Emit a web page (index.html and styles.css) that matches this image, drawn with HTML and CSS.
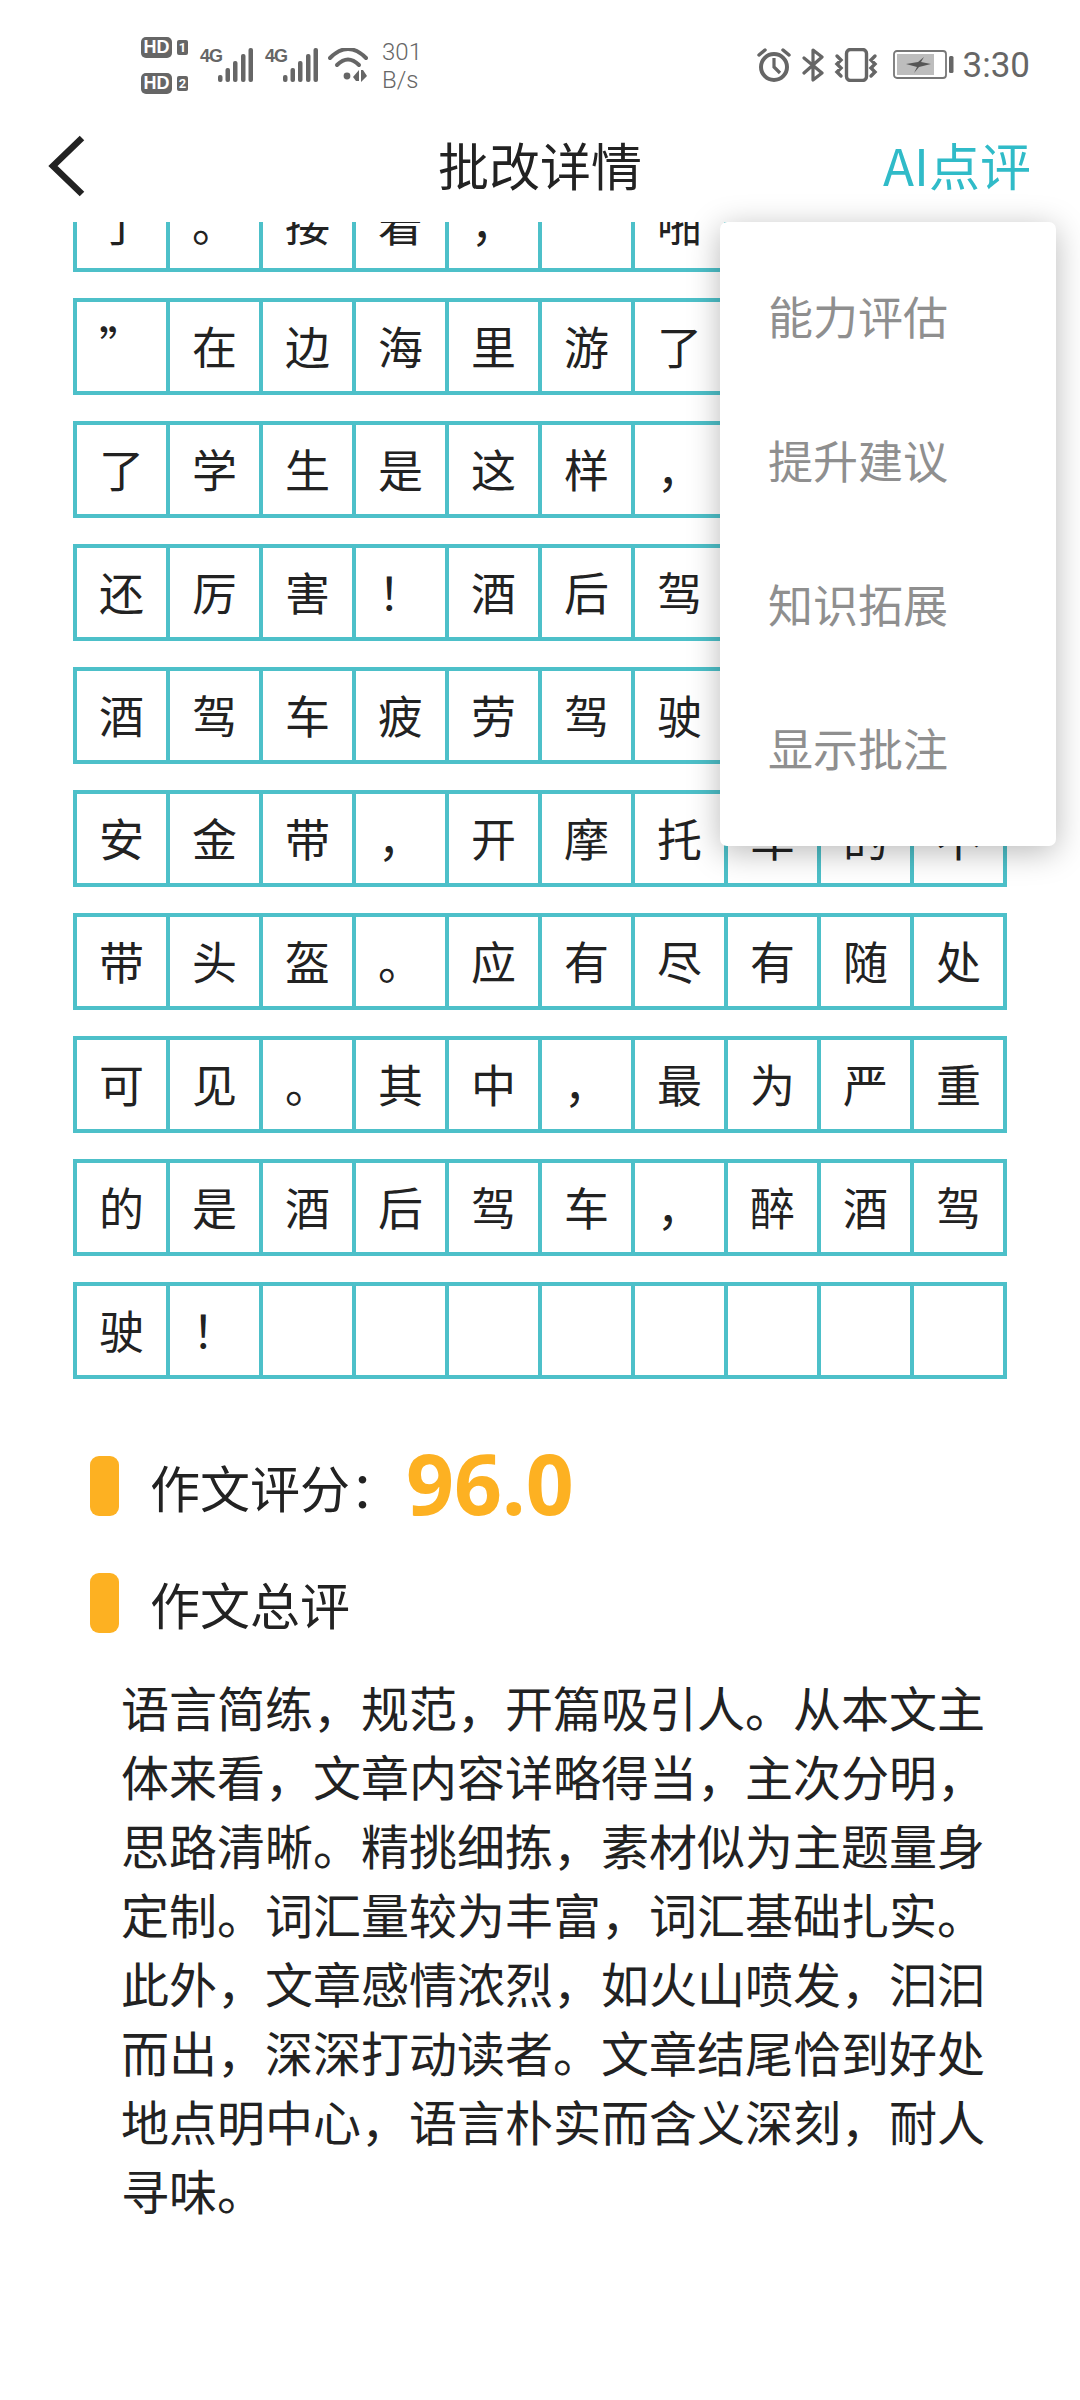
FILE: index.html
```html
<!DOCTYPE html>
<html lang="zh-CN">
<head>
    <meta charset="UTF-8">
    <meta name="viewport" content="width=device-width, initial-scale=1.0">
    <title>批改详情</title>
    <link rel="stylesheet" href="styles.css">
</head>
<body>
<div class="page">
    <div class="status-bar">
        <div class="sim-block">
            <div class="sim-row"><span class="hd">HD</span><span class="sim-no">1</span></div>
            <div class="sim-row"><span class="hd">HD</span><span class="sim-no">2</span></div>
        </div>
        <div class="signal">
            <span class="net">4G</span>
            <svg class="bars" viewBox="0 0 35 34"><rect x="0" y="27" width="4.5" height="7" rx="2"/><rect x="7.5" y="20" width="4.5" height="14" rx="2"/><rect x="15" y="13" width="4.5" height="21" rx="2"/><rect x="23" y="6" width="4.5" height="28" rx="2"/><rect x="30.5" y="0" width="4.5" height="34" rx="2"/></svg>
        </div>
        <div class="signal">
            <span class="net">4G</span>
            <svg class="bars" viewBox="0 0 35 34"><rect x="0" y="27" width="4.5" height="7" rx="2"/><rect x="7.5" y="20" width="4.5" height="14" rx="2"/><rect x="15" y="13" width="4.5" height="21" rx="2"/><rect x="23" y="6" width="4.5" height="28" rx="2"/><rect x="30.5" y="0" width="4.5" height="34" rx="2"/></svg>
        </div>
        <svg class="wifi" viewBox="0 0 40 34"><path d="M2 10 Q20 -8 38 10" fill="none" stroke="#666" stroke-width="4" stroke-linecap="round"/><path d="M9 17 Q20 6 31 17" fill="none" stroke="#666" stroke-width="4" stroke-linecap="round"/><circle cx="19" cy="28" r="3.4" fill="#666"/><path d="M31 22 V33 H28 L25 29 Z M33 22 H35 L39 28 H33 Z M33 28 H39 L33 34 Z" fill="#666"/></svg>
        <div class="speed"><span>301</span><span>B/s</span></div>
        <div class="status-right">
            <svg class="alarm" viewBox="0 0 34 34"><circle cx="17" cy="19" r="13" fill="none" stroke="#666" stroke-width="4"/><path d="M17 10 V19 L23 25" fill="none" stroke="#666" stroke-width="3.2"/><path d="M2 7 L8 2 M32 7 L26 2" stroke="#666" stroke-width="3.5" stroke-linecap="round"/></svg>
            <svg class="bluetooth" viewBox="0 0 22 34"><path d="M2 10 L20 25 L11 32 V2 L20 9 L2 25" fill="none" stroke="#666" stroke-width="3.2" stroke-linejoin="round" stroke-linecap="round"/></svg>
            <svg class="vibrate" viewBox="0 0 44 34"><rect x="12.5" y="1.5" width="20" height="31" rx="4" fill="none" stroke="#666" stroke-width="3.4"/><path d="M3 6 L7 10 L3 14 L7 18 L3 22 L7 26 M41 6 L37 10 L41 14 L37 18 L41 22 L37 26" transform="translate(0 2)" fill="none" stroke="#666" stroke-width="3.4" stroke-linecap="round"/></svg>
            <svg class="battery" viewBox="0 0 62 30"><rect x="1" y="1" width="52" height="27" rx="3" fill="none" stroke="#777" stroke-width="1.8"/><rect x="4" y="4" width="37" height="21" fill="#bdbdbd"/><path d="M13 14 L25 12 L31 7 L28 12 L38 14 L26 17 L21 23 L24 17 Z" fill="#555"/><rect x="56" y="6" width="4.5" height="17" rx="1.5" fill="#666"/></svg>
            <span class="clock">3:30</span>
        </div>
    </div>

    <header class="nav">
        <svg class="back" viewBox="0 0 40 62"><path d="M35 3 L6 31 L35 59" fill="none" stroke="#222" stroke-width="6.5"/></svg>
        <h1 class="nav-title">批改详情</h1>
        <a class="nav-action">AI点评</a>
    </header>

    <main class="content">
        <div class="essay-grid">
            <div class="grid-row"><span class="cell">了</span><span class="cell">。</span><span class="cell">接</span><span class="cell">着</span><span class="cell">，</span><span class="cell"></span><span class="cell">啪</span><span class="cell"></span><span class="cell"></span><span class="cell"></span></div>
            <div class="grid-row"><span class="cell">”</span><span class="cell">在</span><span class="cell">边</span><span class="cell">海</span><span class="cell">里</span><span class="cell">游</span><span class="cell">了</span><span class="cell"></span><span class="cell"></span><span class="cell"></span></div>
            <div class="grid-row"><span class="cell">了</span><span class="cell">学</span><span class="cell">生</span><span class="cell">是</span><span class="cell">这</span><span class="cell">样</span><span class="cell">，</span><span class="cell"></span><span class="cell"></span><span class="cell"></span></div>
            <div class="grid-row"><span class="cell">还</span><span class="cell">厉</span><span class="cell">害</span><span class="cell">！</span><span class="cell">酒</span><span class="cell">后</span><span class="cell">驾</span><span class="cell"></span><span class="cell"></span><span class="cell"></span></div>
            <div class="grid-row"><span class="cell">酒</span><span class="cell">驾</span><span class="cell">车</span><span class="cell">疲</span><span class="cell">劳</span><span class="cell">驾</span><span class="cell">驶</span><span class="cell"></span><span class="cell"></span><span class="cell"></span></div>
            <div class="grid-row"><span class="cell">安</span><span class="cell">金</span><span class="cell">带</span><span class="cell">，</span><span class="cell">开</span><span class="cell">摩</span><span class="cell">托</span><span class="cell">车</span><span class="cell">的</span><span class="cell">不</span></div>
            <div class="grid-row"><span class="cell">带</span><span class="cell">头</span><span class="cell">盔</span><span class="cell">。</span><span class="cell">应</span><span class="cell">有</span><span class="cell">尽</span><span class="cell">有</span><span class="cell">随</span><span class="cell">处</span></div>
            <div class="grid-row"><span class="cell">可</span><span class="cell">见</span><span class="cell">。</span><span class="cell">其</span><span class="cell">中</span><span class="cell">，</span><span class="cell">最</span><span class="cell">为</span><span class="cell">严</span><span class="cell">重</span></div>
            <div class="grid-row"><span class="cell">的</span><span class="cell">是</span><span class="cell">酒</span><span class="cell">后</span><span class="cell">驾</span><span class="cell">车</span><span class="cell">，</span><span class="cell">醉</span><span class="cell">酒</span><span class="cell">驾</span></div>
            <div class="grid-row"><span class="cell">驶</span><span class="cell">！</span><span class="cell"></span><span class="cell"></span><span class="cell"></span><span class="cell"></span><span class="cell"></span><span class="cell"></span><span class="cell"></span><span class="cell"></span></div>
        </div>

        <div class="section-row score-row">
            <span class="marker"></span>
            <span class="section-title">作文评分：</span>
            <span class="score">96.0</span>
        </div>
        <div class="section-row">
            <span class="marker"></span>
            <span class="section-title">作文总评</span>
        </div>
        <p class="comment">语言简练，规范，开篇吸引人。从本文主体来看，文章内容详略得当，主次分明，思路清晰。精挑细拣，素材似为主题量身定制。词汇量较为丰富，词汇基础扎实。此外，文章感情浓烈，如火山喷发，汩汩而出，深深打动读者。文章结尾恰到好处地点明中心，语言朴实而含义深刻，耐人寻味。</p>
    </main>

    <ul class="popup-menu">
        <li>能力评估</li>
        <li>提升建议</li>
        <li>知识拓展</li>
        <li>显示批注</li>
    </ul>
</div>
</body>
</html>
```

FILE: styles.css
```css
* {
    box-sizing: border-box;
}
body {
    margin: 0;
    font-family: "Noto Sans CJK SC", "Noto Sans", sans-serif;
    color: #222;
    background: #fff;
}
.page {
    position: relative;
    width: 1080px;
    height: 2400px;
    overflow: hidden;
}

/* status bar */
.status-bar {
    display: flex;
    align-items: flex-start;
    height: 110px;
    padding: 37px 50px 0 141px;
    color: #666;
    font-family: Roboto, sans-serif;
}
.sim-block {
    display: flex;
    flex-direction: column;
    gap: 15px;
    width: 47px;
}
.sim-row {
    display: flex;
    align-items: center;
    justify-content: space-between;
    height: 21px;
}
.hd {
    width: 31px;
    height: 21px;
    border-radius: 5px;
    background: #666;
    color: #fff;
    font-size: 18px;
    font-weight: 700;
    line-height: 21px;
    text-align: center;
    font-family: "Liberation Sans", sans-serif;
}
.sim-no {
    width: 11px;
    height: 15px;
    border-radius: 2px;
    background: #666;
    color: #fff;
    font-size: 13px;
    font-weight: 700;
    line-height: 15px;
    text-align: center;
}
.signal {
    display: flex;
    align-items: flex-start;
    margin: 11px 0 0 12px;
    width: 53px;
}
.net {
    width: 18px;
    margin-top: -2px;
    font-size: 18px;
    font-weight: 700;
    letter-spacing: -1px;
    line-height: 20px;
    font-family: "Liberation Sans Narrow", "Liberation Sans", sans-serif;
}
.bars {
    width: 35px;
    height: 34px;
    fill: #666;
}
.wifi {
    width: 40px;
    height: 34px;
    margin: 11px 0 0 10px;
}
.speed {
    display: flex;
    flex-direction: column;
    margin: 1px 0 0 14px;
    font-size: 24px;
    line-height: 28px;
    font-weight: 300;
}
.status-right {
    display: flex;
    align-items: center;
    margin-left: auto;
    margin-top: 10px;
    height: 36px;
}
.alarm {
    width: 34px;
    height: 34px;
}
.bluetooth {
    width: 22px;
    height: 34px;
    margin-left: 11px;
}
.vibrate {
    width: 44px;
    height: 34px;
    margin-left: 10px;
}
.battery {
    width: 62px;
    height: 30px;
    margin-left: 15px;
}
.clock {
    margin-left: 8px;
    font-size: 35px;
}

/* title bar */
.nav {
    position: relative;
    display: flex;
    align-items: center;
    justify-content: center;
    height: 112px;
    padding: 0 49px 0 47px;
    background: #fff;
    z-index: 1;
}
.back {
    width: 40px;
    height: 62px;
    margin-right: auto;
}
.nav-title {
    position: absolute;
    left: 50%;
    top: 22px;
    transform: translateX(-50%);
    margin: 0;
    font-size: 51px;
    font-weight: 400;
    line-height: 64px;
}
.nav-action {
    font-size: 51px;
    line-height: 64px;
    margin-bottom: 4px;
    color: #30bbc8;
}

/* essay */
.content {
    height: 2178px;
    overflow: hidden;
}
.essay-grid {
    display: flex;
    flex-direction: column;
    gap: 26px;
    margin: -47px 0 0 73px;
}
.grid-row {
    display: flex;
}
.cell {
    display: flex;
    align-items: center;
    justify-content: center;
    flex: none;
    width: 97px;
    height: 97px;
    margin-right: -4px;
    padding-bottom: 3px;
    border: 4px solid #4dc0c9;
    font-size: 45px;
    line-height: 1;
}

/* score + comment */
.section-row {
    display: flex;
    align-items: center;
    height: 60px;
    margin-left: 90px;
    margin-top: 57px;
}
.score-row {
    margin-top: 77px;
}
.marker {
    width: 29px;
    height: 60px;
    border-radius: 9px;
    background: #fdb122;
}
.section-title {
    margin-left: 31px;
    font-size: 50px;
}
.score {
    margin: -6px 0 0 6px;
    font-family: "Noto Sans", sans-serif;
    font-size: 84px;
    font-weight: 700;
    line-height: 60px;
    color: #fdb122;
}
.comment {
    width: 864px;
    margin: 39px 0 0 121px;
    font-size: 48px;
    line-height: 69px;
}

/* dropdown */
.popup-menu {
    position: absolute;
    top: 222px;
    left: 720px;
    width: 336px;
    margin: 0;
    padding: 24px 0;
    list-style: none;
    background: #fff;
    border-radius: 7px;
    box-shadow: 0 6px 32px rgba(0, 0, 0, 0.28);
    z-index: 2;
}
.popup-menu li {
    display: flex;
    align-items: center;
    height: 144px;
    padding: 0 0 5px 48px;
    font-size: 45px;
    color: #8f8f8f;
}
```
